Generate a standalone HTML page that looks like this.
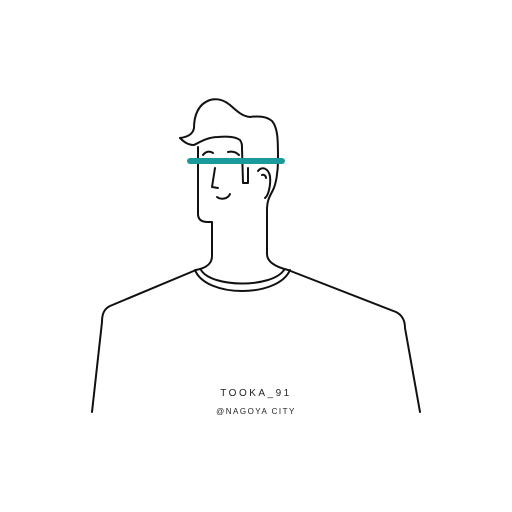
<!DOCTYPE html><html><head><style>body{margin:0;background:#fff;width:512px;height:512px;overflow:hidden;position:relative}
.t{position:absolute;left:0;width:512px;text-align:center;font-family:"Liberation Sans",sans-serif;color:#222}</style></head><body>
<svg width="512" height="512" style="position:absolute;left:0;top:0" fill="none" stroke="#111" stroke-width="2" stroke-linecap="round" stroke-linejoin="round">
<path d="M180,138 C188,137 193,134 194,128 C194,116 198,104 210,100 C218,98 224,100 230,105 C238,112 242,116 250,117 C258,116 266,116 272,121 C278,128 278,140 278,160"/>
<path d="M180,138 C184,142 188,145 194,145 C200,142 208,137 218,137 C228,136 236,137 240,140 C242,143 242,145 242,148 L243,183 L248,183 L248,168"/>
<path d="M198,147 L198,214 C198,220 202,222 208,222 L212,222 L212,256 C212,264 206,268 196,270"/>
<path d="M278,160 C278,172 276,184 273,190 C270,196 267,200 267,210 L267,254 C267,262 276,267 288,270"/>
<path d="M258,171 C262,166 268,168 270,176 C271,186 268,196 265,198"/>
<path d="M262,175 C264,174 266,176 266,178"/>
<path d="M201,270 C212,288 272,288 284,270"/>
<path d="M195,270 C206,298 278,298 290,270"/>
<path d="M196,270 L110,306 C104,309 102,314 102,322 L92,412"/>
<path d="M288,270 L396,312 C402,315 405,320 405,328 L420,412"/>
<path d="M203,155 C206,151 210,151 213,153"/>
<path d="M228,152 C232,151 236,152 239,155"/>
<path d="M215,168 L212,187 L218,188"/>
<path d="M217,197 C221,200 228,199 230,194"/>
</svg>
<div style="position:absolute;left:187px;top:158px;width:98px;height:6px;background:#1b9a9b;border-radius:3px"></div>
<div class="t" style="top:388px;font-size:10px;letter-spacing:2.5px">TOOKA_91</div>
<div class="t" style="top:407px;font-size:8px;letter-spacing:1.5px">@NAGOYA CITY</div>
</body></html>
